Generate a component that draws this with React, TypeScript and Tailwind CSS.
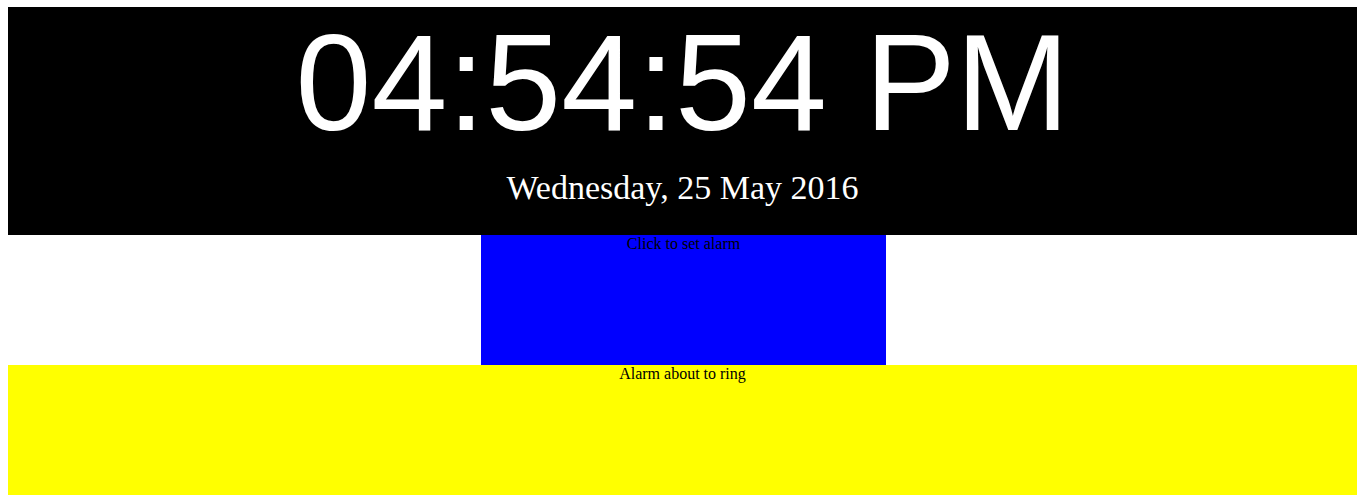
import React from "react";

export default function App() {
  return (
    <div className="min-h-screen w-full bg-white px-[8px] pt-[7px] font-['Liberation_Serif',serif] text-[16px] text-black">
      {/* Clock panel */}
      <div className="flex h-[228px] w-full flex-col items-center bg-black text-white">
        <div className="whitespace-nowrap font-['Liberation_Sans',Arial,sans-serif] text-[136.5px] leading-[152px]">
          04:54:54 PM
        </div>
        <div className="mt-[12px] whitespace-nowrap text-[34px] leading-[34px]">
          Wednesday, 25 May 2016
        </div>
      </div>

      {/* Alarm setter */}
      <div className="ml-[473px] h-[130px] w-[405px] cursor-pointer bg-[#0000ff] text-center leading-[18px]">
        Click to set alarm
      </div>

      {/* Warning strip */}
      <div className="h-[130px] w-full bg-[#ffff00] text-center leading-[18px]">
        Alarm about to ring
      </div>
    </div>
  );
}
